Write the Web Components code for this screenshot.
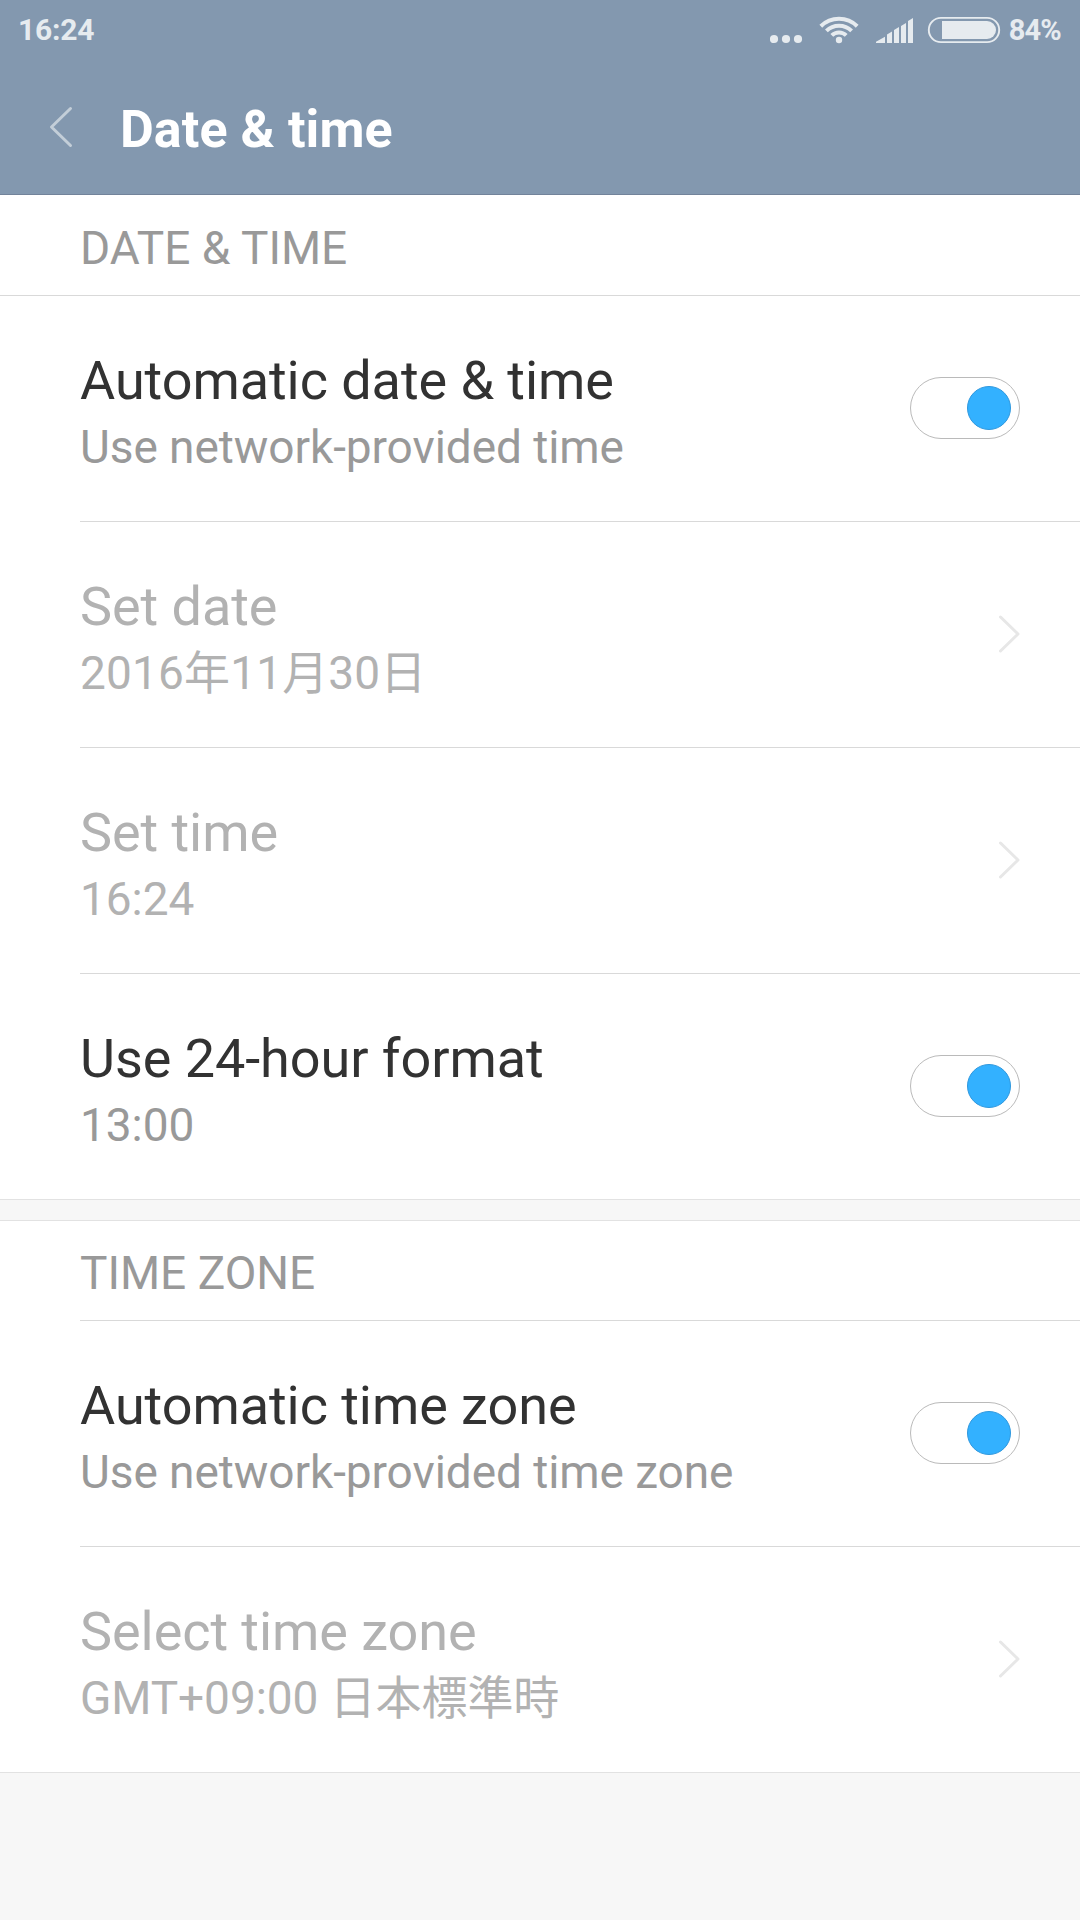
<!DOCTYPE html>
<html lang="en">
<head>
<meta charset="utf-8">
<title>Date &amp; time</title>
<style>
body{margin:0;background:#f7f7f7;font-family:Roboto,"Noto Sans CJK JP",sans-serif;width:1080px;height:1920px;overflow:hidden}
</style>
</head>
<body>
<settings-page></settings-page>
<script>
function define(name, html) {
  const t = document.createElement('template');
  t.innerHTML = html;
  customElements.define(name, class extends HTMLElement {
    constructor() {
      super();
      this.attachShadow({mode: 'open'}).appendChild(t.content.cloneNode(true));
    }
  });
}

define('status-bar', `
<style>
:host{display:flex;height:60px;align-items:flex-start;justify-content:space-between;color:#e6ebef;font-weight:700;padding:0 19px 0 18px;box-sizing:border-box}
.time{font-size:30px;line-height:60px;letter-spacing:-.2px}
.right{display:flex;height:60px}
.pct{font-size:29px;line-height:60px;margin-left:7px;letter-spacing:-.8px}
svg{display:block}
</style>
<span class="time">16:24</span>
<div class="right">
<svg width="232" height="60" viewBox="770 0 232 60" fill="#e6ebef">
<circle cx="774" cy="39" r="4.1"/><circle cx="786" cy="39" r="4.1"/><circle cx="798" cy="39" r="4.1"/>
<circle cx="839" cy="40" r="3.2"/>
<g fill="none" stroke="#e6ebef" stroke-width="4">
<path d="M820.8 26.2a26 26 0 0 1 36.4 0"/>
<path d="M826.4 30.9a18 18 0 0 1 25.2 0"/>
<path d="M831.8 35.4a10.3 10.3 0 0 1 14.4 0"/>
</g>
<path d="M876 43v-1.3l9-4.9V43zM887 43V34.5l5-3V43zM894 43V30l5-3V43zM901 43V26l5-3V43zM908 43V21l5-3V43z"/>
<rect x="928.8" y="17.9" width="70.4" height="24.2" rx="12.1" fill="none" stroke="#e6ebef" stroke-width="1.9"/>
<path d="M942 21h45a9 9 0 0 1 0 18h-45z"/>
</svg>
<span class="pct">84%</span>
</div>`);

define('title-bar', `
<style>
:host{display:flex;height:134px;align-items:center;color:#fff;padding-left:49px}
svg{display:block}
h1{margin:6px 0 0 46px;font-size:52px;line-height:62px;font-weight:700;letter-spacing:.08px}
</style>
<svg width="25" height="42" viewBox="49 106 25 42" fill="none" stroke="#c3ced8" stroke-width="3" stroke-linecap="round" stroke-linejoin="round"><path d="M70.5 108.5L51.5 127L70.5 145.5"/></svg>
<h1><slot></slot></h1>`);

define('toggle-switch', `
<style>
:host{display:flex;width:110px;height:62px;box-sizing:border-box;border:1px solid #bababa;border-radius:31px;align-items:center;justify-content:flex-end;padding-right:8px;background:#fff}
i{display:block;width:44px;height:44px;box-sizing:border-box;border-radius:50%;background:#33b1ff;border:1px solid #2f98de}
</style><i></i>`);

define('chevron-icon', `
<style>:host{display:block}svg{display:block}</style>
<svg width="22" height="38" viewBox="0 0 22 38" fill="none" stroke="#e7e7e7" stroke-width="3" stroke-linecap="round" stroke-linejoin="round"><path d="M2.5 2L20 19L2.5 36"/></svg>`);

define('setting-row', `
<style>
:host{display:flex;height:226px;margin-left:80px;box-sizing:border-box;border-bottom:1px solid #d9d9d9;padding:0 60px 1px 0;justify-content:space-between;align-items:center;color:#323232}
:host([last]){margin-left:0;padding-left:80px;border-color:#e2e2e2}
:host([disabled]){color:#b2b2b2}
.text{display:flex;flex-direction:column;align-self:flex-start;padding-top:53px}
.t{font-size:54px;line-height:64px;letter-spacing:-.06px}
.s{font-size:46px;line-height:68px;color:#999;letter-spacing:-.07px}
:host([disabled]) .s{color:#b2b2b2}
</style>
<div class="text"><div class="t"><slot></slot></div><div class="s"><slot name="summary"></slot></div></div>
<slot name="control"></slot>`);

define('section-title', `
<style>
:host{display:block;height:100px;box-sizing:border-box;border-bottom:1px solid #d9d9d9;margin-left:80px;padding-top:24px;font-size:46px;line-height:56px;color:#999}
:host([wide]){height:101px;margin-left:0;padding:25px 0 0 80px}
</style><slot></slot>`);

define('settings-group', `
<style>
:host{display:block;background:#fff}
:host([spaced]){margin-top:20px;border-top:1px solid #e2e2e2}
</style><slot></slot>`);

define('settings-page', `
<style>
:host{display:block}
header{background:#8398af;border-bottom:1px solid #72839a}
.date{letter-spacing:.15px}
</style>
<header><status-bar></status-bar><title-bar>Date &amp; time</title-bar></header>
<settings-group>
<section-title wide>DATE &amp; TIME</section-title>
<setting-row>Automatic date &amp; time<span slot="summary">Use network-provided time</span><toggle-switch slot="control"></toggle-switch></setting-row>
<setting-row disabled>Set date<span slot="summary" class="date">2016年11月30日</span><chevron-icon slot="control"></chevron-icon></setting-row>
<setting-row disabled>Set time<span slot="summary">16:24</span><chevron-icon slot="control"></chevron-icon></setting-row>
<setting-row last>Use 24-hour format<span slot="summary">13:00</span><toggle-switch slot="control"></toggle-switch></setting-row>
</settings-group>
<settings-group spaced>
<section-title>TIME ZONE</section-title>
<setting-row>Automatic time zone<span slot="summary">Use network-provided time zone</span><toggle-switch slot="control"></toggle-switch></setting-row>
<setting-row disabled last>Select time zone<span slot="summary">GMT+09:00 日本標準時</span><chevron-icon slot="control"></chevron-icon></setting-row>
</settings-group>`);
</script>
</body>
</html>
